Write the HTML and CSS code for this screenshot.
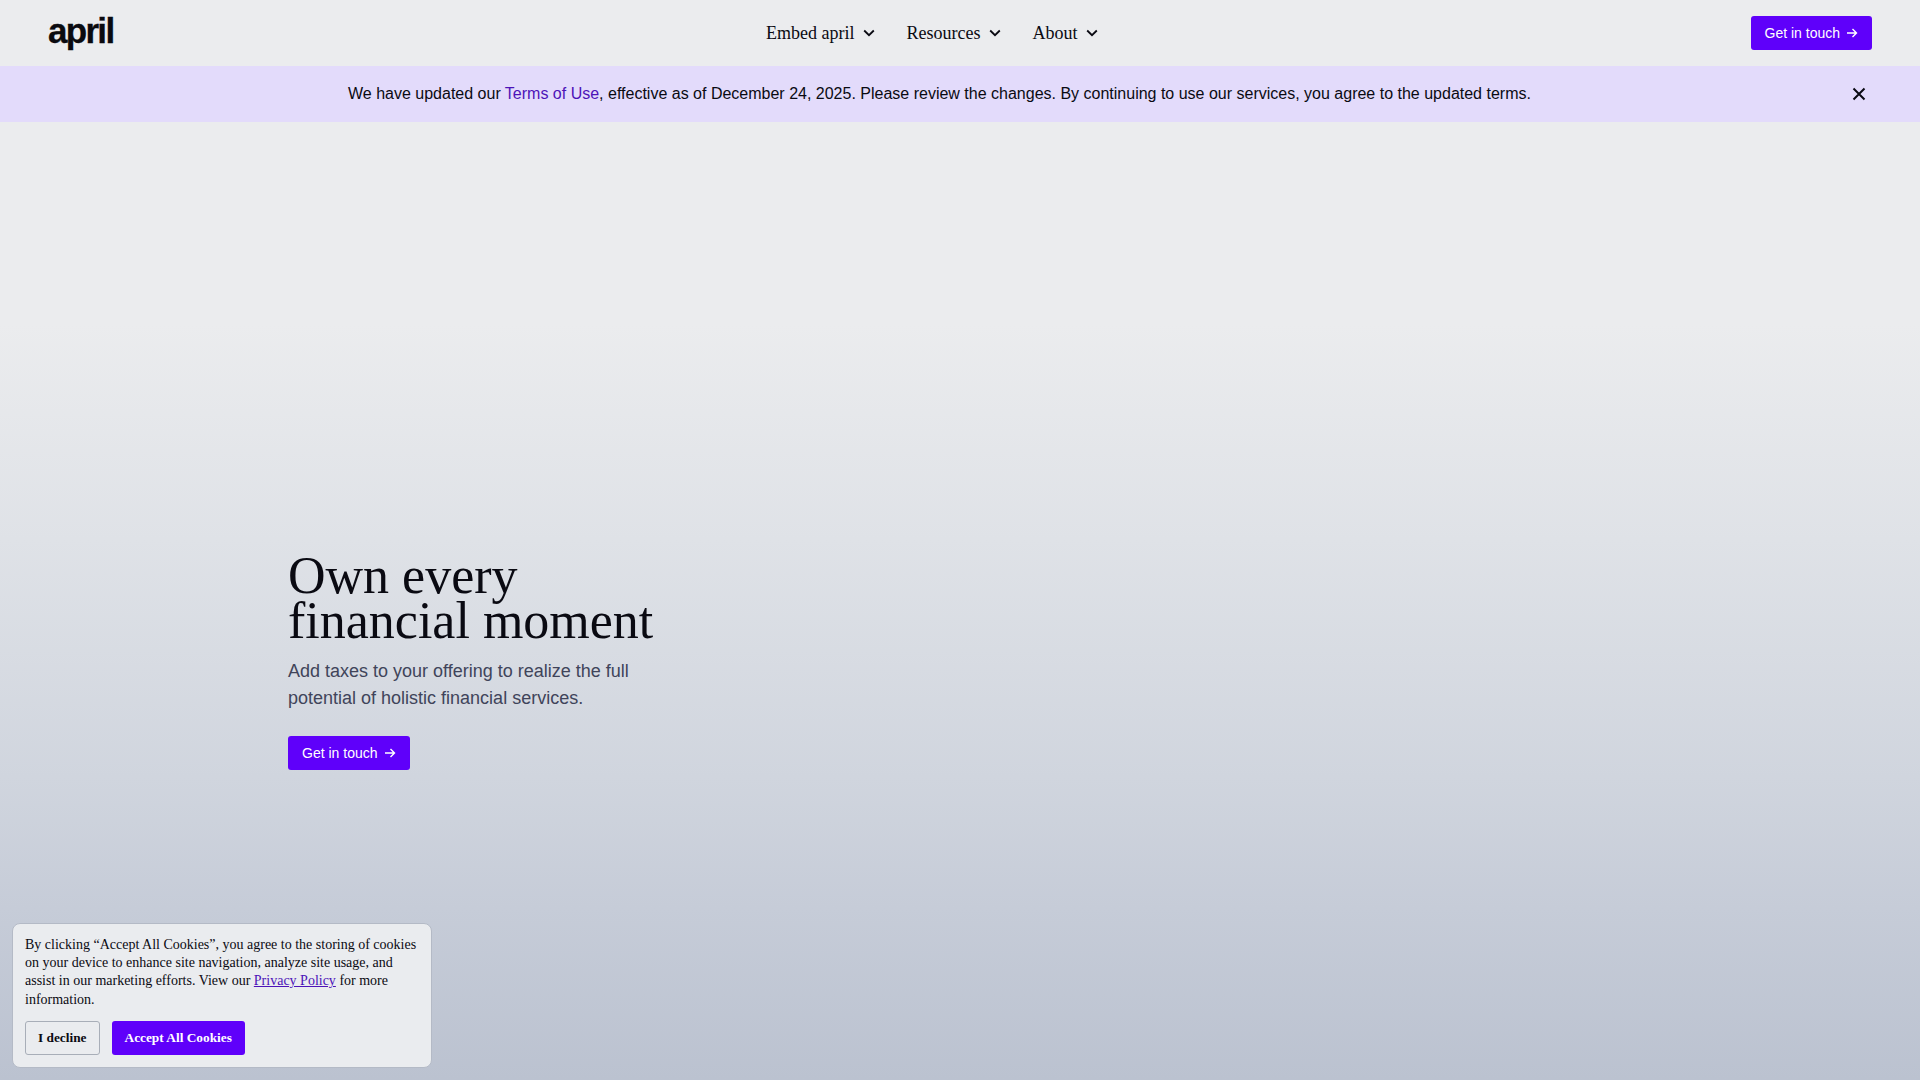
FILE: index.html
```html
<!DOCTYPE html>
<html lang="en">
<head>
  <meta charset="UTF-8" />
  <meta name="viewport" content="width=device-width, initial-scale=1.0"/>
  <title>april</title>
  <link rel="stylesheet" href="styles.css">
</head>
<body>
  <header class="nav">
    <a class="logo" href="#">april</a>
    <nav class="nav-links">
      <a href="#">Embed april
        <svg class="chev" viewBox="0 0 12 8" width="12" height="8"><path d="M1.2 1.5 6 6.2l4.8-4.7" fill="none" stroke="currentColor" stroke-width="1.8"/></svg>
      </a>
      <a href="#">Resources
        <svg class="chev" viewBox="0 0 12 8" width="12" height="8"><path d="M1.2 1.5 6 6.2l4.8-4.7" fill="none" stroke="currentColor" stroke-width="1.8"/></svg>
      </a>
      <a href="#">About
        <svg class="chev" viewBox="0 0 12 8" width="12" height="8"><path d="M1.2 1.5 6 6.2l4.8-4.7" fill="none" stroke="currentColor" stroke-width="1.8"/></svg>
      </a>
    </nav>
    <a class="btn nav-btn" href="#">Get in touch
      <svg viewBox="0 0 12 12" width="12" height="12"><path d="M1 6h9.5M6.5 2l4 4-4 4" fill="none" stroke="currentColor" stroke-width="1.4"/></svg>
    </a>
  </header>

  <div class="banner">
    <p>We have updated our <a href="#">Terms of Use</a>, effective as of December 24, 2025. Please review the changes. By continuing to use our services, you agree to the updated terms.</p>
    <button class="banner-close" aria-label="Close">
      <svg viewBox="0 0 14 14" width="14" height="14"><path d="M1.5 1.5l11 11M12.5 1.5l-11 11" fill="none" stroke="currentColor" stroke-width="2"/></svg>
    </button>
  </div>

  <main class="hero">
    <h1>Own every<br>financial moment</h1>
    <p class="hero-sub">Add taxes to your offering to realize the full<br>potential of holistic financial services.</p>
    <a class="btn" href="#">Get in touch
      <svg viewBox="0 0 12 12" width="12" height="12"><path d="M1 6h9.5M6.5 2l4 4-4 4" fill="none" stroke="currentColor" stroke-width="1.4"/></svg>
    </a>
  </main>

  <aside class="cookies">
    <p>By clicking “Accept All Cookies”, you agree to the storing of cookies on your device to enhance site navigation, analyze site usage, and assist in our marketing efforts. View our <a href="#">Privacy Policy</a> for more information.</p>
    <div class="cookie-actions">
      <button class="cookie-btn decline">I decline</button>
      <button class="cookie-btn accept">Accept All Cookies</button>
    </div>
  </aside>
</body>
</html>
```

FILE: styles.css
```css
* { box-sizing: border-box; }
html, body { height: 100%; }
body {
  margin: 0;
  height: 1080px;
  overflow: hidden;
  font-family: "Liberation Sans", Arial, sans-serif;
  color: #0a0a12;
  background: linear-gradient(180deg, #ebecee 0%, #ebecee 30%, #dfe2e7 50%, #d0d5de 72%, #c6ccd8 84%, #bbc2d0 100%);
  display: flex;
  flex-direction: column;
}
a { text-decoration: none; color: inherit; }

.nav {
  height: 66px;
  flex: none;
  padding: 0 48px;
  background: #ebecee;
  display: grid;
  grid-template-columns: 718px auto 1fr;
  align-items: center;
}
.logo {
  font-size: 35px;
  font-weight: bold;
  letter-spacing: -1.7px;
  line-height: 36px;
  color: #0a0a0f;
  -webkit-text-stroke: 0.3px #0a0a0f;
  margin-top: -4px;
}
.nav-links {
  display: flex;
  gap: 31px;
  font-family: "Liberation Serif", "Times New Roman", serif;
  font-size: 18px;
}
.nav-links a { display: flex; align-items: center; gap: 9px; }

.btn {
  display: inline-flex;
  align-items: center;
  gap: 6px;
  height: 34px;
  padding: 0 14px;
  align-self: flex-start;
  background: #5f00fa;
  color: #fff;
  border-radius: 3px;
  font-size: 14px;
}
.nav-btn { justify-self: end; align-self: center; }

.banner {
  height: 56px;
  flex: none;
  background: #e3dbfb;
  display: flex;
  align-items: center;
  justify-content: space-between;
  padding: 0 54px 0 348px;
  font-size: 16px;
}
.banner p { margin: 0; }
.banner a { color: #4d13b8; }
.banner-close {
  border: 0;
  background: none;
  padding: 0;
  color: #0a0a12;
  display: flex;
}

.hero {
  display: flex;
  flex-direction: column;
  padding: 431px 0 0 288px;
}
.hero h1 {
  margin: 0;
  font-family: "Liberation Serif", "Times New Roman", serif;
  font-weight: normal;
  font-size: 52px;
  line-height: 45px;
}
.hero-sub {
  margin: 15px 0 24px;
  font-size: 18px;
  line-height: 27px;
  color: #40445a;
}

.cookies {
  position: fixed;
  left: 12px;
  bottom: 12px;
  width: 420px;
  padding: 12px;
  background: #eaecef;
  border: 1px solid #b4bac6;
  border-radius: 8px;
  font-family: "Liberation Serif", "Times New Roman", serif;
  font-size: 14px;
  line-height: 18.3px;
}
.cookies p { margin: 0 0 12px; }
.cookies a { color: #4d13b8; text-decoration: underline; }
.cookie-actions { display: flex; gap: 12px; }
.cookie-btn {
  height: 34px;
  border-radius: 3px;
  font-family: inherit;
  font-size: 13.33px;
  font-weight: bold;
  padding: 0 12px;
}
.decline { background: #eaecef; border: 1px solid #a8aeb8; color: #0a0a12; }
.accept { background: #5f00fa; border: 0; color: #fff; padding: 0 13px; }
```
